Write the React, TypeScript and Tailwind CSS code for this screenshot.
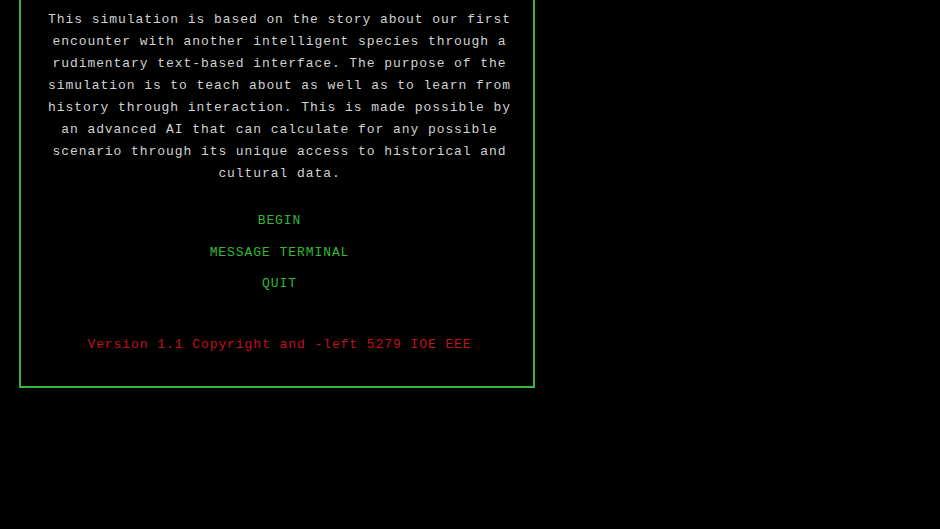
const intro = [
  "This simulation is based on the story about our first",
  "encounter with another intelligent species through a",
  "rudimentary text-based interface. The purpose of the",
  "simulation is to teach about as well as to learn from",
  "history through interaction. This is made possible by",
  "an advanced AI that can calculate for any possible",
  "scenario through its unique access to historical and",
  "cultural data.",
];

const menu = ["BEGIN", "MESSAGE TERMINAL", "QUIT"];

export default function App() {
  return (
    <div
      className="min-h-screen h-[529px] overflow-hidden bg-black text-[13px] leading-[22px] tracking-[0.93px]"
      style={{ fontFamily: '"Liberation Mono", "Courier New", monospace' }}
    >
      <div className="ml-[19px] -mt-[12px] w-[516px] border-2 border-[#3ab73a] pt-[19px] pb-[30px] pl-[25px] pr-[20px] text-center">
        {/* Intro */}
        <div className="text-[#d2d2d2]">
          {intro.map((line) => (
            <div key={line} className="whitespace-nowrap">
              {line}
            </div>
          ))}
        </div>

        {/* Menu */}
        <div className="mt-[25px] flex flex-col gap-[9.5px] text-[#35b835]">
          {menu.map((item) => (
            <div key={item}>{item}</div>
          ))}
        </div>

        {/* Footer */}
        <div className="mt-[39px] text-[#c4101c]">
          Version 1.1 Copyright and -left 5279 IOE EEE
        </div>
      </div>
    </div>
  );
}
